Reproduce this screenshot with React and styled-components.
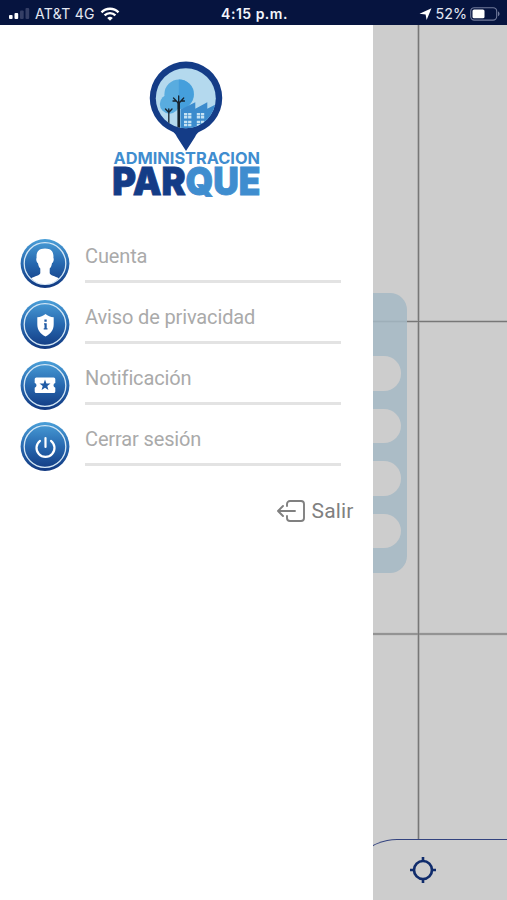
import React from 'react';
import styled, { createGlobalStyle } from 'styled-components';

const GlobalStyle = createGlobalStyle`
  * {
    box-sizing: border-box;
  }

  body {
    margin: 0;
    background: #fff;
    font-family: Roboto, "Liberation Sans", sans-serif;
  }
`;

const Screen = styled.div`
  display: flex;
  flex-direction: column;
  width: 507px;
  height: 900px;
  overflow: hidden;
`;

const StatusBar = styled.header`
  display: grid;
  grid-template-columns: 1fr auto 1fr;
  align-items: center;
  height: 25px;
  padding: 2px 6px 0 8px;
  background: #06143f;
  color: #e4e8f3;
  font-family: Inter, "Liberation Sans", sans-serif;
  font-size: 13px;
  line-height: 16px;
  white-space: nowrap;
`;

const StatusGroup = styled.div`
  display: flex;
  align-items: center;
  justify-content: ${(props) => (props.$end ? 'flex-end' : 'flex-start')};
`;

const Carrier = styled.span`
  margin: 0 5px 0 5px;
  font-size: 14px;
  letter-spacing: 0.3px;
`;

const Clock = styled.span`
  color: #f3f5fb;
  font-size: 14px;
  font-weight: 600;
  letter-spacing: 0.5px;
`;

const Percent = styled.span`
  margin: 0 3px 0 4px;
  font-size: 14.3px;
`;

const Body = styled.div`
  display: flex;
  flex: 1;
  min-height: 0;
`;

const Drawer = styled.nav`
  display: flex;
  flex: none;
  flex-direction: column;
  width: 372.5px;
  background: #fff;
`;

const Brand = styled.div`
  display: flex;
  height: 210px;
  padding: 31px 0 0 108px;
`;

const Menu = styled.ul`
  margin: 0;
  padding: 0 0 0 20px;
  list-style: none;
`;

const MenuItem = styled.li`
  display: flex;
  height: 61px;
  cursor: pointer;
`;

const Badge = styled.span`
  display: flex;
  flex: none;
  width: 50px;
  height: 50px;
  margin: 3px 15px 0 0;
`;

const MenuLabel = styled.span`
  width: 256px;
  height: 48px;
  padding-top: 9px;
  border-bottom: 3px solid #e3e3e3;
  color: #aaa;
  font-size: 20px;
  letter-spacing: -0.13px;
  line-height: 24px;
`;

const ExitButton = styled.button`
  display: flex;
  align-items: center;
  align-self: flex-end;
  margin: 19px 19px 0 0;
  padding: 0;
  border: 0;
  background: none;
  color: #808080;
  font-family: inherit;
  font-size: 21px;
  letter-spacing: 0.15px;
  line-height: 26px;
  cursor: pointer;
`;

const ExitIcon = styled.svg`
  width: 28px;
  height: 24px;
  margin-right: 7px;
`;

const MapArea = styled.main`
  position: relative;
  display: flex;
  flex: 1;
  flex-direction: column;
  justify-content: space-between;
  overflow: hidden;
  background: #cdcdcd;
`;

const MapGrid = styled.svg`
  position: absolute;
  inset: 0;
`;

const ToolPanel = styled.div`
  position: relative;
  display: flex;
  flex-direction: column;
  gap: 18px;
  width: 34.5px;
  height: 280px;
  margin-top: 268px;
  padding: 63px 6.5px 0 0;
  border-radius: 0 17px 17px 0;
  background: rgba(165, 185, 196, 0.85);
`;

const Tool = styled.div`
  height: 34.5px;
  border-radius: 0 17px 17px 0;
  background: #cdcdcd;
`;

const BottomBar = styled.footer`
  position: relative;
  display: flex;
  width: 180px;
  height: 61px;
  margin-left: -27px;
  padding: 16px 0 0 62px;
  border-top: 1.5px solid #33437f;
  border-left: 1.5px solid #33437f;
  border-top-left-radius: 51px;
  background: #cdcdcd;
`;

const menu = [
  { icon: 'account', label: 'Cuenta' },
  { icon: 'privacy', label: 'Aviso de privacidad' },
  { icon: 'ticket', label: 'Notificación' },
  { icon: 'power', label: 'Cerrar sesión' },
];

const glyphs = {
  account: (
    <path
      fill="#fff"
      d="M25 10.500c-6.500 0-8.900 3.500-8.400 9.500-1 .8.200 4.700 1.400 5.200.5 3 1.300 4.300 2.300 5.400v4.300c0 2.300-5.800 3.300-9.100 5.300A20.400 20.400 0 0 0 25 46.300a20.400 20.400 0 0 0 13.800-6.100c-3.300-2-9.100-3-9.100-5.300v-4.300c1-1.100 1.800-2.400 2.300-5.400 1.200-.5 2.400-4.400 1.400-5.200.5-6-1.900-9.500-8.400-9.500z"
    />
  ),
  privacy: (
    <>
      <path fill="#fff" d="M25.500 15c2.400 2 5 3 8.200 3.200v7c0 5.500-3 9.800-8.200 12.300-5.200-2.500-8.200-6.800-8.200-12.300v-7c3.200-.2 5.800-1.200 8.200-3.200z" />
      <path fill="#205ba5" d="M24.400 20.500h2.300v2.200h-2.300zM24 24.300h2.700v5h.8v1.200h-3.800v-1.200h.8v-3.800H24z" />
    </>
  ),
  ticket: (
    <>
      <path fill="#fff" d="M16.300 17.500h17.400a1.600 1.600 0 0 1 1.600 1.600v3.800a2.500 2.500 0 0 0 0 4.800v3.800a1.600 1.600 0 0 1-1.600 1.600H16.300a1.600 1.600 0 0 1-1.600-1.600v-3.800a2.500 2.500 0 0 0 0-4.800v-3.800a1.600 1.600 0 0 1 1.600-1.600z" />
      <path fill="#205ba5" d="m25 19.500 1.400 3.900 4.100.1-3.200 2.500 1.100 4-3.400-2.300-3.400 2.300 1.100-4-3.200-2.500 4.100-.1z" />
    </>
  ),
  power: (
    <g fill="none" stroke="#fff" strokeWidth="2.200" strokeLinecap="round">
      <path d="M25.500 17v9" />
      <path d="M20 19.800a9 9 0 1 0 11 0" />
    </g>
  ),
};

const MenuIcon = ({ name }) => (
  <Badge>
    <svg width="50" height="50" viewBox="0 0 50 50">
      <defs>
        <linearGradient id={`${name}-fill`} x1="0" y1="0" x2="0" y2="1">
          <stop offset="0" stopColor="#4a9fd8" />
          <stop offset="0.5" stopColor="#2768af" />
          <stop offset="1" stopColor="#113880" />
        </linearGradient>
      </defs>
      <circle cx="25" cy="25.500" r="24.400" fill={`url(#${name}-fill)`} />
      <circle cx="25" cy="25.500" r="20.800" fill="none" stroke="#d3e6f5" strokeWidth="1.300" />
      {glyphs[name]}
    </svg>
  </Badge>
);

const Signal = () => (
  <svg width="22" height="12" viewBox="0 0 22 12">
    <rect x="1" y="7" width="3.600" height="4" rx="1" fill="#fff" />
    <rect x="6.500" y="5" width="3.700" height="6" rx="1" fill="#fff" />
    <rect x="12" y="2.500" width="3.700" height="8.500" rx="1" fill="#353f66" />
    <rect x="17.500" y="0" width="3.700" height="11" rx="1" fill="#353f66" />
  </svg>
);

const Wifi = () => (
  <svg width="20" height="14" viewBox="0 0 20 14" fill="none" stroke="#fff" strokeWidth="2.400">
    <path d="M1.500 5.300a12 12 0 0 1 17 0" />
    <path d="M4.600 8.400a7.600 7.600 0 0 1 10.800 0" />
    <path d="M10 13.800 7.200 11a4 4 0 0 1 5.600 0z" fill="#fff" stroke="none" />
  </svg>
);

const Battery = () => (
  <svg width="31" height="14" viewBox="0 0 31 14">
    <rect x="0.700" y="0.700" width="26" height="12.400" rx="3.600" fill="none" stroke="#717a9b" strokeWidth="1.100" />
    <rect x="2.500" y="2.500" width="12" height="8.800" rx="1.600" fill="#fff" />
    <path d="M28 4.600c2 .7 2 4 0 4.700z" fill="#717a9b" />
  </svg>
);

// one four-pane factory window
const Panes = ({ x, y }) => (
  <path d={`M${x} ${y}h3.300v2.400h-3.300zM${x + 4.1} ${y}h3.300v2.400h-3.300zM${x} ${y + 3.1}h3.300v2.400h-3.300zM${x + 4.1} ${y + 3.1}h3.300v2.400h-3.300z`} />
);

const Logo = () => (
  <svg width="160" height="156" viewBox="108 56 160 156">
    <defs>
      <clipPath id="lens">
        <circle cx="185.800" cy="98.200" r="30" />
      </clipPath>
    </defs>
    <path fill="#143c87" d="M186 61.500a36.500 36.500 0 0 1 12.500 70.700c-1.500 1-2.500 2.800-3.500 4.800l-9 14-9-14c-1-2-2-3.800-3.500-4.800A36.500 36.500 0 0 1 186 61.500z" />
    <g clipPath="url(#lens)">
      <rect x="155" y="67" width="62" height="64" fill="#b4d9ee" />
      <circle cx="169.500" cy="104" r="9.700" fill="#59acdf" />
      <circle cx="179.200" cy="94.300" r="14.800" fill="#59acdf" />
      <path fill="#459fdc" d="M178.800 79.500a14.800 14.800 0 0 1 0 29.600z" />
      <path fill="#3b8bcd" d="M180.500 130v-20.500l14.800-7.200v6.400l12-6.400v6.400l11-5.700v27z" />
      <g fill="#c5e2f3">
        <Panes x={184} y={113} />
        <Panes x={196.8} y={113} />
        <Panes x={184} y={120.7} />
        <Panes x={196.8} y={120.7} />
      </g>
      <g fill="none" stroke="#17232e" strokeLinecap="round">
        <path d="M178.700 130v-27" strokeWidth="2.600" />
        <path d="m173.500 98 5.200 5.500 5-5.500M178.700 103v-7M173 101h3M184.500 101h-3" strokeWidth="1.300" />
        <path d="M168.800 129v-16M165.500 109l3.300 3.500 3.200-3.500M168.800 112v-3" strokeWidth="1.300" />
      </g>
    </g>
    <text x="113.500" y="164.400" fill="#3f8dcf" fontFamily="Inter, sans-serif" fontSize="16" fontWeight="700" textLength="146.500" lengthAdjust="spacingAndGlyphs">ADMINISTRACION</text>
    <g fontFamily="Inter, sans-serif" fontSize="37.800" fontWeight="900" strokeWidth="0.800">
      <text x="112.300" y="195.100" fill="#143c87" stroke="#143c87" textLength="73.500" lengthAdjust="spacingAndGlyphs">PAR</text>
      <text x="185.500" y="195.100" fill="#3f8dcf" stroke="#3f8dcf" textLength="75" lengthAdjust="spacingAndGlyphs">QUE</text>
    </g>
  </svg>
);

const App = () => (
  <>
    <GlobalStyle />
    <Screen>
      <StatusBar>
        <StatusGroup>
          <Signal />
          <Carrier>AT&amp;T 4G</Carrier>
          <Wifi />
        </StatusGroup>
        <Clock>4:15 p.m.</Clock>
        <StatusGroup $end>
          <svg width="13" height="12" viewBox="0 0 13 12">
            <path d="M12.500.3 7.600 12 6.600 6.500.5 5.800z" fill="#fff" />
          </svg>
          <Percent>52%</Percent>
          <Battery />
        </StatusGroup>
      </StatusBar>
      <Body>
        <Drawer>
          <Brand>
            <Logo />
          </Brand>
          <Menu>
            {menu.map((item) => (
              <MenuItem key={item.icon}>
                <MenuIcon name={item.icon} />
                <MenuLabel>{item.label}</MenuLabel>
              </MenuItem>
            ))}
          </Menu>
          <ExitButton>
            <ExitIcon viewBox="0 0 28 24" fill="none" stroke="#808080" strokeWidth="1.900" strokeLinecap="round" strokeLinejoin="round">
              <path d="M10 7V5a3 3 0 0 1 3-3h11a3 3 0 0 1 3 3v14a3 3 0 0 1-3 3H13a3 3 0 0 1-3-3v-2" />
              <path d="M18 12H1.500M6 7l-5 5 5 5" />
            </ExitIcon>
            Salir
          </ExitButton>
        </Drawer>
        <MapArea>
          <MapGrid width="135" height="875" fill="none">
            <path d="M45.500 0v815M0 296.500h135M0 609h135" stroke="#b0b0b0" strokeWidth="2.600" />
            <path d="M45.500 0v815M0 296.500h135M0 609h135" stroke="#777" strokeWidth="1.100" />
          </MapGrid>
          <ToolPanel>
            <Tool />
            <Tool />
            <Tool />
            <Tool />
          </ToolPanel>
          <BottomBar>
            <svg width="28" height="28" viewBox="0 0 28 28" fill="none" stroke="#102c6c">
              <circle cx="14" cy="14" r="9" strokeWidth="2.700" />
              <path d="M14 1v5M14 22v5M1 14h5M22 14h5" strokeWidth="2.600" />
            </svg>
          </BottomBar>
        </MapArea>
      </Body>
    </Screen>
  </>
);

export default App;
